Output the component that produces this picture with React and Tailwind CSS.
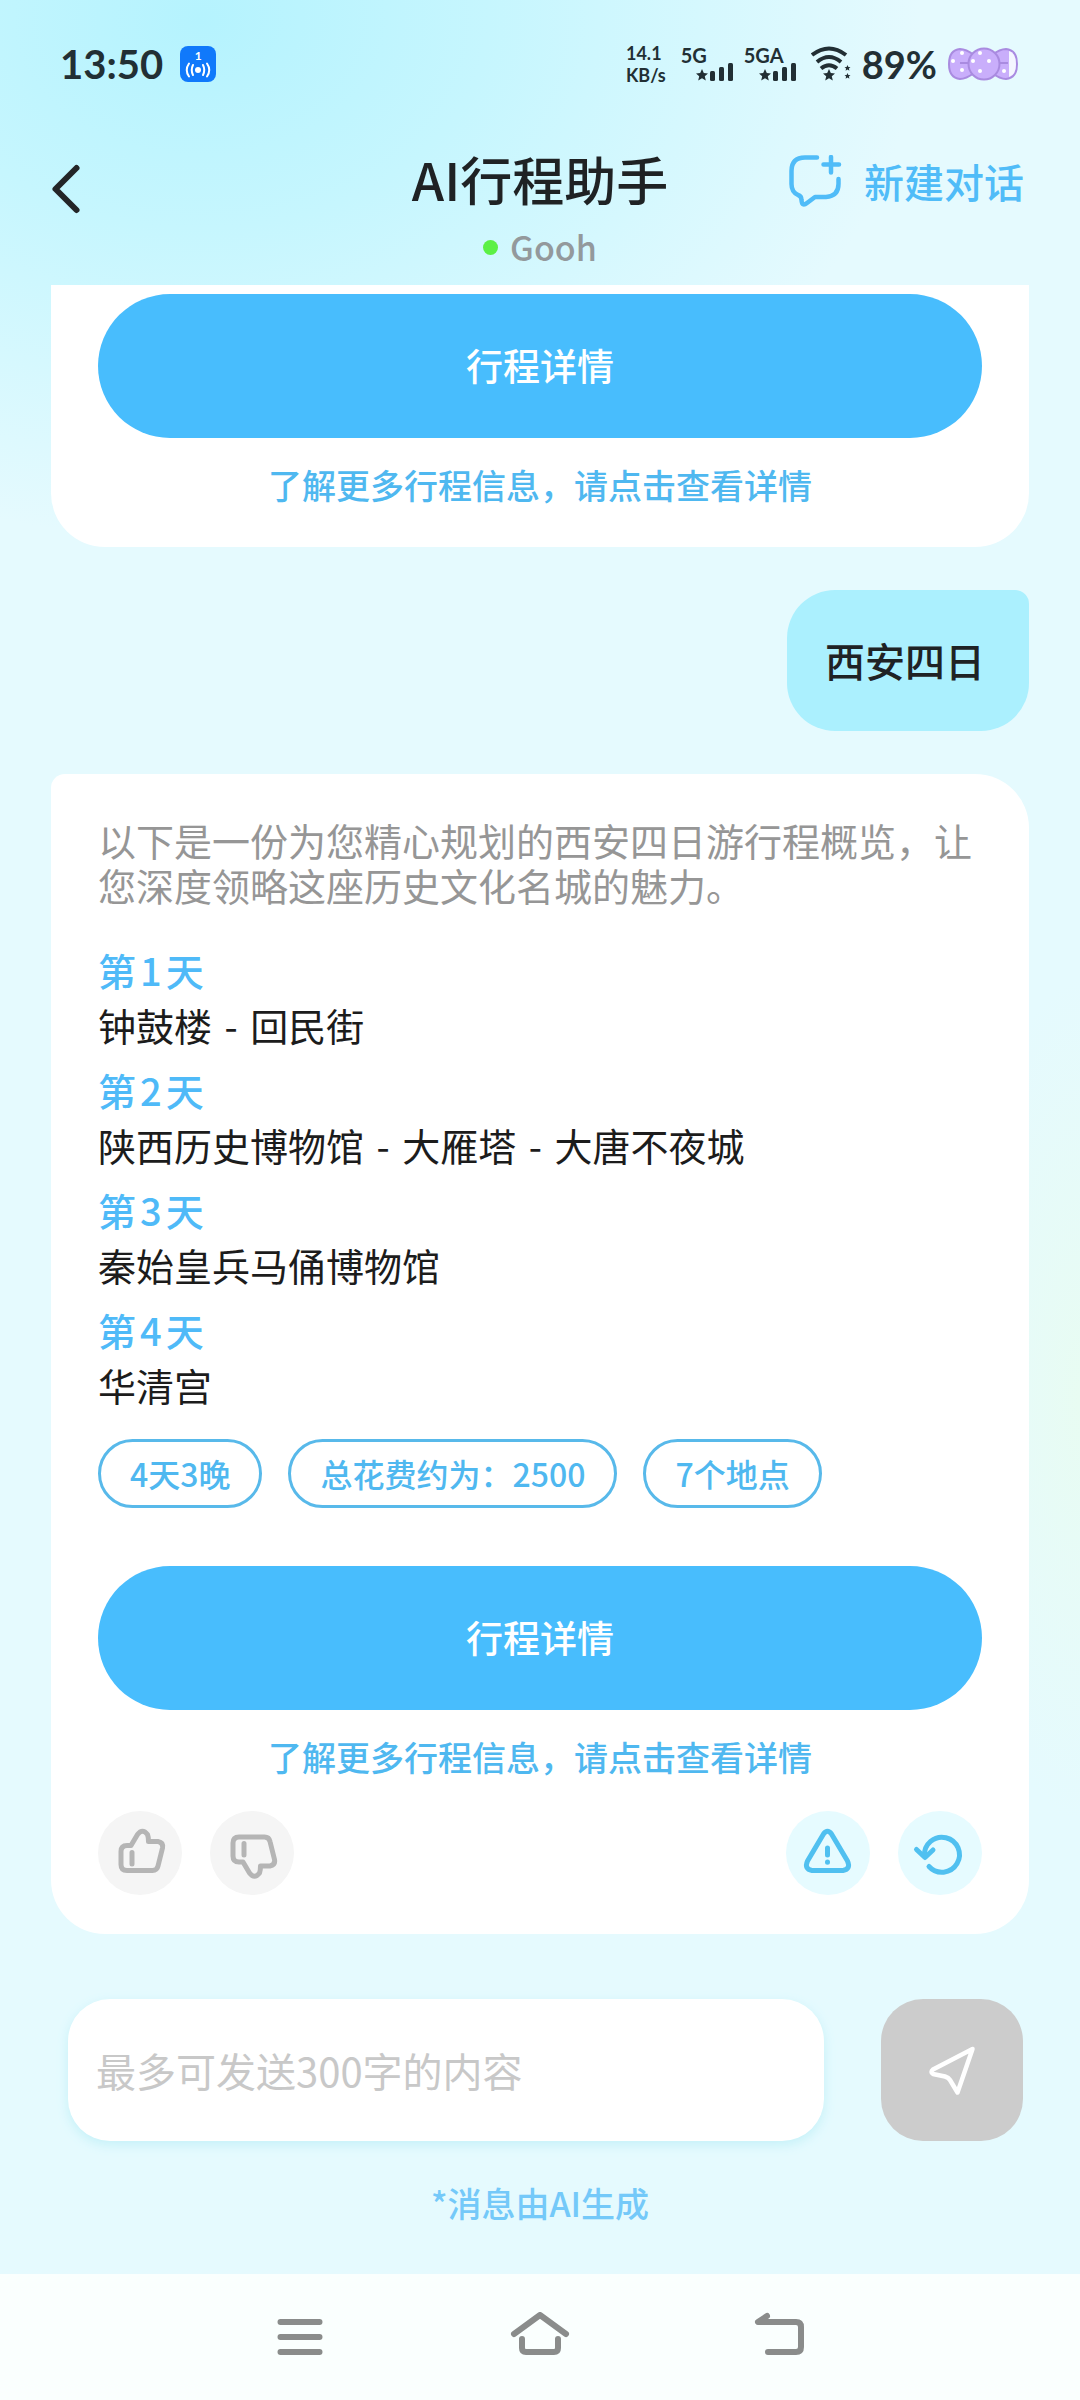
import React, { useState } from 'react';

const days = [
  { day: 1, stops: ['钟鼓楼', '回民街'] },
  { day: 2, stops: ['陕西历史博物馆', '大雁塔', '大唐不夜城'] },
  { day: 3, stops: ['秦始皇兵马俑博物馆'] },
  { day: 4, stops: ['华清宫'] },
];

const tags = ['4天3晚', '总花费约为：2500', '7个地点'];

const STAR = 'M0 -6 L1.8 -2 L6 -1.6 L2.8 1.2 L3.8 5.4 L0 3.2 L-3.8 5.4 L-2.8 1.2 L-6 -1.6 L-1.8 -2 Z';

function HotspotIcon() {
  return (
    <span className="relative flex h-9 w-9 justify-center rounded-lg bg-[#1079fb] text-white">
      <span className="text-[12px] font-bold leading-[20px]">1</span>
      <svg className="absolute inset-0" viewBox="0 0 36 36" fill="none" stroke="white" strokeWidth="2" strokeLinecap="round">
        <circle cx="18" cy="24" r="3" fill="white" stroke="none" />
        <path d="M13 19 Q10.5 24 13 29 M9 17.500 Q4.500 24 9 30.500 M23 19 Q25.500 24 23 29 M27 17.500 Q31.500 24 27 30.500" />
      </svg>
    </span>
  );
}

function Signal({ label }) {
  return (
    <div className="flex w-[52px] flex-col">
      <span className="text-[20px] font-bold leading-4">{label}</span>
      <svg className="self-end" width="38" height="18" viewBox="0 0 38 18" fill="currentColor">
        <path d={STAR} transform="translate(7 12)" />
        <rect x="15" y="8" width="5" height="10" rx="1.500" />
        <rect x="24" y="4" width="5" height="14" rx="1.500" />
        <rect x="33" y="0" width="5" height="18" rx="1.500" />
      </svg>
    </div>
  );
}

function WifiIcon() {
  return (
    <svg width="40" height="36" viewBox="0 0 40 36" fill="none" stroke="currentColor" strokeWidth="4">
      <path d="M1 9 Q18 -4 35 9" />
      <path d="M6 16 Q18 6 30 16" />
      <path d="M10 22.500 Q18 16 26 22.500" />
      <path d={STAR} transform="translate(18 29)" fill="currentColor" stroke="none" />
      <path d={STAR} transform="translate(36.500 22) scale(0.500)" fill="currentColor" stroke="none" />
      <path d={STAR} transform="translate(36.500 30) scale(0.500)" fill="currentColor" stroke="none" />
    </svg>
  );
}

function BowBattery() {
  return (
    <svg width="70" height="34" viewBox="0 0 70 34" fill="#c9aefb" stroke="#a98be0" strokeWidth="2">
      <path d="M26 8 Q18 2 12 2 Q1 3 1 17 Q1 31 12 32 Q18 32 26 26 Z" />
      <path d="M44 8 Q52 2 58 2 Q69 3 69 17 Q69 31 58 32 Q52 32 44 26 Z" />
      <path d="M61 4 Q68 6 68 17 Q68 28 61 30 Z" fill="#f4f6ff" stroke="none" />
      <path d="M12 16 H21 M50 16 H60" />
      <circle cx="36" cy="17" r="15.500" />
      <g fill="white" stroke="none">
        <circle cx="14" cy="6" r="2" />
        <circle cx="5" cy="14" r="2" />
        <circle cx="14" cy="23" r="2" />
        <circle cx="32" cy="6" r="2" />
        <circle cx="25" cy="14" r="2" />
        <circle cx="41" cy="14" r="2" />
        <circle cx="32" cy="24" r="2" />
        <circle cx="56" cy="24" r="2" />
      </g>
    </svg>
  );
}

function StatusBar() {
  return (
    <div className="flex h-12 items-center justify-between pl-[60px] pr-[62px] font-['Lato',sans-serif] text-[#222f34]">
      <div className="flex items-center gap-[17px]">
        <span className="text-[40px] font-bold leading-[48px]">13:50</span>
        <HotspotIcon />
      </div>
      <div className="flex items-center gap-[11px]">
        <div className="mr-1 flex flex-col gap-px text-[18px] font-bold leading-[21px]">
          <span>14.1</span>
          <span>KB/s</span>
        </div>
        <Signal label="5G" />
        <Signal label="5GA" />
        <div className="ml-1">
          <WifiIcon />
        </div>
        <span className="text-[38px] font-bold leading-[48px]">89%</span>
        <BowBattery />
      </div>
    </div>
  );
}

function Header() {
  return (
    <header className="pt-10">
      <StatusBar />
      <div className="mt-[61px] grid grid-cols-[1fr_auto_1fr] px-14 pb-[18px]">
        <button aria-label="返回" className="mt-[14px] h-[52px] w-8 self-start">
          <svg width="32" height="52" viewBox="5 0 32 52" fill="none" stroke="#232527" strokeWidth="6" strokeLinecap="round" strokeLinejoin="round" overflow="visible">
            <path d="M25.500 5 L4.500 26 L25.500 47" />
          </svg>
        </button>
        <div className="flex flex-col items-center">
          <h1 className="text-[52px] font-medium leading-[60px] text-[#1f2224]">AI行程助手</h1>
          <p className="mt-[18px] flex items-center gap-3 text-[34px] font-medium leading-10 text-[#93999c]">
            <span className="h-[15px] w-[15px] rounded-full bg-[#5cf045]" />
            Gooh
          </p>
        </div>
        <button className="flex h-[64px] items-center gap-[22px] justify-self-end text-[40px] font-medium leading-[64px] text-[#50bcf8]">
          <svg width="53" height="53" viewBox="0 0 53 53" fill="none" stroke="currentColor" strokeWidth="4.500" strokeLinecap="round" strokeLinejoin="round">
            <path d="M28 2.500 H16 Q2.500 2.500 2.500 16 V29 Q2.500 37 9 40 Q12.500 41 12.500 45 Q13 52 18 48 L26 42 H37 Q49.500 41 49.500 29 V24" />
            <path d="M42 2 V17.500 M34.500 9.500 H50" />
          </svg>
          新建对话
        </button>
      </div>
    </header>
  );
}

function DetailAction() {
  return (
    <>
      <button className="h-36 w-full rounded-full bg-[#48bdfd] text-[37px] font-medium text-white">行程详情</button>
      <p className="mt-[23px] text-center text-[34px] font-medium leading-[48px] text-[#4fb8f0]">
        了解更多行程信息，请点击查看详情
      </p>
    </>
  );
}

const THUMB = 'M29 34.500 H33 L39.500 23.500 Q44.500 17 49.500 23.500 Q50.500 26 50.500 30.500 H60 Q65.500 31.500 64.500 37 L60 55 Q59 59.500 54.500 59.500 H29 Q23 59.500 23 53.500 V40.500 Q23 34.500 29 34.500 Z M34 41.500 V53';

function RoundButton({ label, className, children }) {
  return (
    <button aria-label={label} className={`h-[84px] w-[84px] rounded-full ${className}`}>
      <svg viewBox="0 0 84 84" fill="none" stroke="currentColor" strokeWidth="5" strokeLinecap="round" strokeLinejoin="round">
        {children}
      </svg>
    </button>
  );
}

function Feedback() {
  return (
    <div className="mt-[30px] flex justify-between">
      <div className="flex gap-7">
        <RoundButton label="赞" className="bg-[#f5f5f5] text-[#b5b5b5]">
          <path d={THUMB} />
        </RoundButton>
        <RoundButton label="踩" className="bg-[#f5f5f5] text-[#b5b5b5]">
          <path d={THUMB} transform="matrix(1 0 0 -1 0 85.500)" />
        </RoundButton>
      </div>
      <div className="flex gap-7">
        <RoundButton label="举报" className="bg-[#e6fbff] text-[#50c0f0]">
          <path d="M37.500 23 Q41.500 17.500 45.500 23 L61.500 50 Q65 58 57 59.500 H26 Q18 58 21.500 50 Z" />
          <path d="M41.500 37 V44 M41.500 51 V51.200" />
        </RoundButton>
        <RoundButton label="重新生成" className="bg-[#e6fbff] text-[#50c0f0]">
          <path d="M31 55.500 A17.500 17.500 0 1 0 26.500 45" />
          <path d="M18.500 38.500 L27 46.500 L35 39" />
        </RoundButton>
      </div>
    </div>
  );
}

function TripCard() {
  return (
    <section className="mt-[43px] rounded-[54px] rounded-tl-[14px] bg-white px-[47px] pb-[39px] pt-[43px]">
      <p className="text-[38px] leading-[45px] text-[#969696]">
        以下是一份为您精心规划的西安四日游行程概览，让您深度领略这座历史文化名城的魅力。
      </p>
      <div className="mt-[35px] flex flex-col gap-[10px] text-[38px] leading-[55px]">
        {days.map(({ day, stops }) => (
          <div key={day}>
            <h2 className="font-medium text-[#4fbaf8]">
              第<span className="mx-1">{day}</span>天
            </h2>
            <p className="text-[#1c1c1c]">
              {stops.map((stop, i) => (
                <React.Fragment key={stop}>
                  {i > 0 && <span className="mx-1"> - </span>}
                  {stop}
                </React.Fragment>
              ))}
            </p>
          </div>
        ))}
      </div>
      <div className="mb-[58px] mt-[27px] flex gap-[26px]">
        {tags.map((tag) => (
          <span key={tag} className="rounded-full border-3 border-[#58b9ea] px-[29px] text-[32px] font-medium leading-[63px] text-[#4fb8f0]">
            {tag}
          </span>
        ))}
      </div>
      <DetailAction />
      <Feedback />
    </section>
  );
}

function Composer() {
  const [message, setMessage] = useState('');

  return (
    <footer className="pb-[46px] pt-[65px]">
      <form className="flex gap-[57px] pl-[68px] pr-[57px]" onSubmit={(e) => e.preventDefault()}>
        <input
          type="text"
          aria-label="消息"
          maxLength={300}
          value={message}
          onChange={(e) => setMessage(e.target.value)}
          placeholder="最多可发送300字的内容"
          className="h-[142px] min-w-0 flex-1 rounded-[42px] bg-white px-7 text-[40px] text-[#222222] shadow-[0_4px_12px_#c5f1f8] outline-none placeholder:text-[#c8c8c8]"
        />
        <button aria-label="发送" className="h-[142px] w-[142px] rounded-[42px] bg-[#cccccc]">
          <svg viewBox="0 0 142 142" fill="none" stroke="white" strokeWidth="4.500" strokeLinejoin="round">
            <path d="M91.500 50 L52 70.500 Q49 73 52 75 L64 77.500 Q67.500 78.500 69 81 L76.500 93.500 Z" />
          </svg>
        </button>
      </form>
      <p className="mt-[37px] text-center text-[34px] font-medium leading-[50px] text-[#74c9f9]">*消息由AI生成</p>
    </footer>
  );
}

function SystemNav() {
  return (
    <nav className="flex h-[126px] items-center justify-center gap-[180px] bg-[#fafffe] text-[#8a8c8b]">
      <button aria-label="最近任务">
        <svg width="60" height="50" viewBox="0 0 60 50" fill="none" stroke="currentColor" strokeWidth="6" strokeLinecap="round">
          <path d="M10.500 10 H49.500 M10.500 25 H49.500 M10.500 40 H49.500" />
        </svg>
      </button>
      <button aria-label="主屏幕">
        <svg width="60" height="50" viewBox="0 0 60 50" fill="none" stroke="currentColor" strokeWidth="6" strokeLinecap="round" strokeLinejoin="round">
          <path d="M4 22 L30 3 L56 22" />
          <path d="M12 27 V36 Q12 40 16 40 H44 Q48 40 48 36 V27" />
        </svg>
      </button>
      <button aria-label="返回上一级">
        <svg width="60" height="50" viewBox="0 0 60 50" fill="none" stroke="currentColor" strokeWidth="6" strokeLinecap="round" strokeLinejoin="round">
          <path d="M17 4 L8 10 H46 Q51 10 51 15 V35 Q51 40 46 40 H18" />
        </svg>
      </button>
    </nav>
  );
}

function App() {
  return (
    <div className="flex min-h-screen flex-col bg-[#e5fafe] bg-[radial-gradient(ellipse_720px_520px_at_200px_20px,#b5f3fe_0%,#c6f6fe_40%,transparent_100%),radial-gradient(ellipse_120px_420px_at_100%_1400px,#e8fcf2_0%,transparent_100%)] font-['Noto_Sans_CJK_SC',sans-serif]">
      <Header />
      <main className="flex-1 px-[51px]">
        <section className="rounded-b-[54px] bg-white px-[47px] pb-[38px] pt-[9px]">
          <DetailAction />
        </section>
        <div className="mt-[43px] flex justify-end">
          <p className="rounded-[48px] rounded-tr-[14px] bg-[#abf0fe] pl-[38px] pr-[44px] text-[40px] font-medium leading-[141px] text-[#1f2224]">西安四日</p>
        </div>
        <TripCard />
      </main>
      <Composer />
      <SystemNav />
    </div>
  );
}

export default App;
